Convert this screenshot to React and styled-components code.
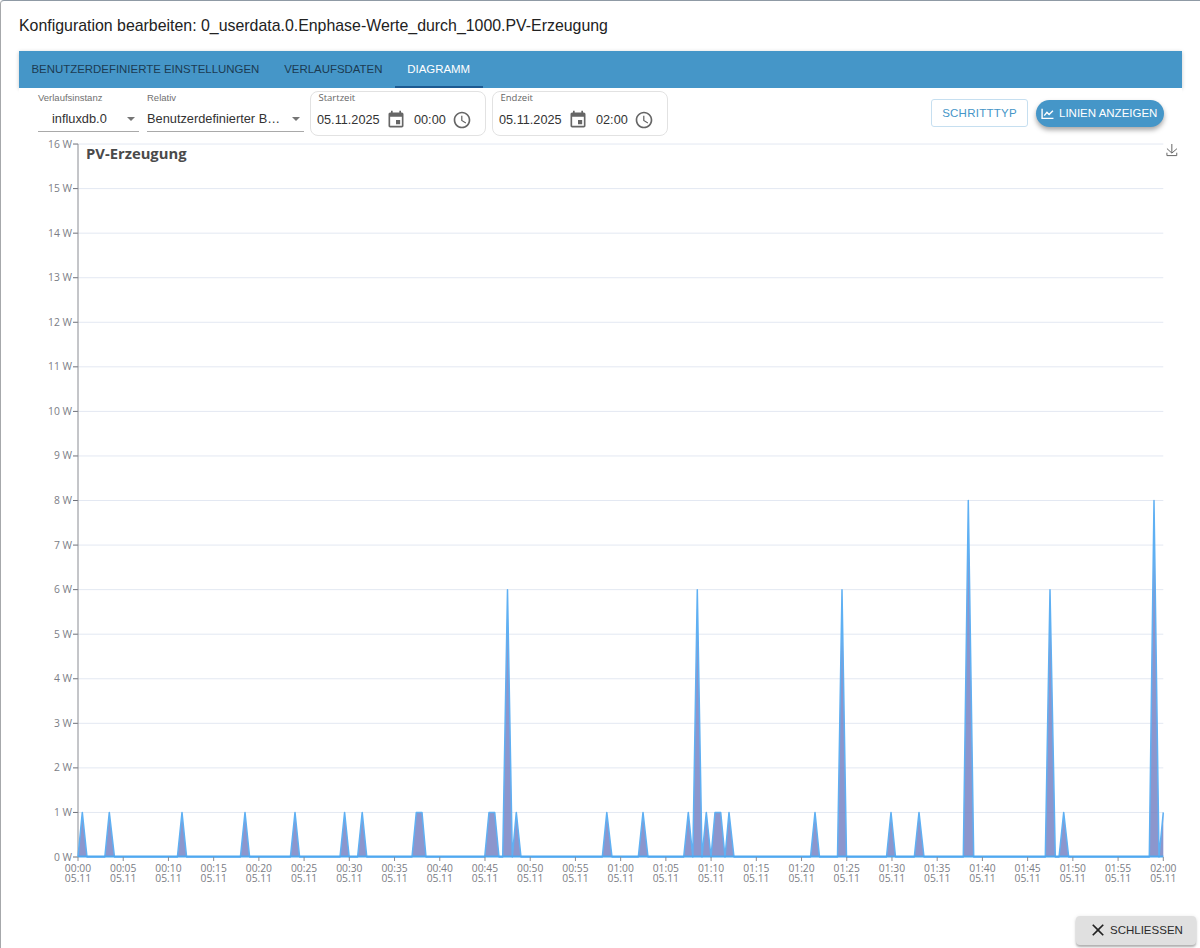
import React from "react";
import styled, { createGlobalStyle } from "styled-components";

const Global = createGlobalStyle`
  html, body { margin: 0; padding: 0; background: #fff; }
  body { font-family: "Liberation Sans", Arial, sans-serif; color: #1f1f1f; }
  * { box-sizing: border-box; }
`;

const Dialog = styled.div`
  width: 1200px;
  height: 948px;
  padding: 0 4px 0 18px;
  background: #fff;
  border-left: 1px solid #a6a8ab;
  border-top: 1px solid #8f9aa5;
  border-top-left-radius: 4px;
  display: flex;
  flex-direction: column;
  overflow: hidden;
`;

const Title = styled.h2`
  margin: 0;
  height: 50px;
  padding-top: 15px;
  font-size: 15.9px;
  line-height: 20px;
  font-weight: 400;
  color: #222;
`;

const Body = styled.div`
  width: 1163px;
  height: 837px;
  display: flex;
  flex-direction: column;
`;

const TabBar = styled.div`
  height: 37px;
  background: #4596c8;
  display: flex;
  box-shadow: 0 1px 4px rgba(0, 0, 0, 0.22);
`;

const Tab = styled.div`
  height: 37px;
  padding: 12px 12.4px 0;
  font-size: 11.45px;
  line-height: 13px;
  color: ${(p) => (p.$active ? "#fff" : "#1c3b52")};
  border-bottom: 2px solid ${(p) => (p.$active ? "#1b5a92" : "transparent")};
`;

const Toolbar = styled.div`
  height: 49px;
  padding: 3px 18px 0 19px;
  display: flex;
  align-items: flex-start;
  background: #fff;
  position: relative;
`;

const SelectField = styled.div`
  width: ${(p) => p.$w}px;
  margin-right: ${(p) => p.$mr}px;
  height: 41px;
  border-bottom: 1px solid #a9a9a9;
  position: relative;
  display: flex;
  flex-direction: column;
`;

const SelectLabel = styled.div`
  font-size: 9.5px;
  line-height: 13px;
  color: #707070;
  white-space: nowrap;
`;

const SelectValue = styled.div`
  margin-top: 6px;
  padding-left: ${(p) => p.$pl}px;
  font-size: 12.8px;
  line-height: 18px;
  color: #333;
  white-space: nowrap;
`;

const Caret = styled.span`
  position: absolute;
  right: 4px;
  top: 26px;
  border-left: 4px solid transparent;
  border-right: 4px solid transparent;
  border-top: 4px solid #757575;
`;

const DateBox = styled.div`
  width: 176px;
  height: 45px;
  margin-right: 6px;
  border: 1px solid #e2e2e2;
  border-radius: 8px;
  padding: 0 6px;
  display: flex;
  flex-direction: column;
`;

const DateLabel = styled.div`
  font-family: "Open Sans", sans-serif;
  font-size: 9.5px;
  line-height: 12px;
  padding-left: 1.5px;
  color: #666;
`;

const DateRow = styled.div`
  display: flex;
  align-items: center;
  height: 24px;
  margin-top: 4px;
  font-size: 12.7px;
  color: #333;
  white-space: nowrap;
`;

const DateText = styled.span`
  width: ${(p) => p.$w}px;
`;

const FieldIcon = styled.svg`
  width: 20px;
  height: 20px;
  fill: #666;
  flex: none;
  margin-top: -1px;
  margin-right: ${(p) => p.$mr || 0}px;
`;

const Spacer = styled.div`
  flex: 1;
`;

const OutlineButton = styled.button`
  width: 97px;
  height: 28px;
  margin: 8px 8px 0 0;
  padding: 0;
  background: #fff;
  border: 1px solid #c6dff0;
  border-radius: 3px;
  color: #4596c8;
  font: 400 11.5px "Liberation Sans", sans-serif;
  letter-spacing: 0.25px;
`;

const PillButton = styled.button`
  width: 128px;
  height: 27px;
  margin-top: 9px;
  padding: 0 0 1px 5px;
  display: flex;
  align-items: center;
  gap: 5px;
  background: #4596c8;
  border: 0;
  border-radius: 14px;
  color: #fff;
  font: 400 11.5px "Liberation Sans", sans-serif;
  white-space: nowrap;
  box-shadow: 0 3px 5px rgba(0, 0, 0, 0.35);
`;

const PillIcon = styled.svg`
  width: 13px;
  height: 13px;
  fill: none;
  stroke: #fff;
  stroke-width: 2.6;
`;

const ChartSvg = styled.svg`
  display: block;
  width: 1163px;
  height: 751px;
`;

const AxisText = styled.text`
  font-family: "Open Sans", "Noto Sans", sans-serif;
  font-size: 10.3px;
  fill: #7b7d85;
`;

const ChartTitle = styled.text`
  font-family: "Open Sans", "Noto Sans", sans-serif;
  font-size: 14.8px;
  font-weight: 700;
  fill: #4a4a4a;
`;

const Footer = styled.div`
  flex: 1;
  display: flex;
  justify-content: flex-end;
  align-items: flex-start;
  padding: 28px 0 0;
`;

const CloseButton = styled.button`
  width: 120px;
  height: 29px;
  display: flex;
  align-items: center;
  padding: 0 0 1px 12px;
  gap: 2px;
  background: #e0e0e0;
  border: 0;
  border-radius: 4px;
  color: #2b2b2b;
  font: 400 11.5px "Liberation Sans", sans-serif;
  box-shadow: 0 2px 2px rgba(0, 0, 0, 0.25), 0 1px 4px rgba(0, 0, 0, 0.12);
`;

const CloseIcon = styled.svg`
  width: 20px;
  height: 20px;
  fill: #222;
`;

const EVENT = "M17 12h-5v5h5v-5zM16 1v2H8V1H6v2H5c-1.11 0-1.99.9-1.99 2L3 19c0 1.1.89 2 2 2h14c1.1 0 2-.9 2-2V5c0-1.1-.9-2-2-2h-1V1h-2zm3 18H5V8h14v11z";
const CLOCK = "M11.99 2C6.47 2 2 6.48 2 12s4.47 10 9.99 10C17.52 22 22 17.52 22 12S17.52 2 11.99 2zM12 20c-4.42 0-8-3.58-8-8s3.58-8 8-8 8 3.58 8 8-3.58 8-8 8zM12.5 7H11v6l5.25 3.15.75-1.23-4.5-2.67z";

const X0 = 78;
const X1 = 1163.3;
const Y0 = 857;
const PW = 44.56;
const yOf = (v) => Y0 - v * PW;

const ticks = Array.from({ length: 25 }, (_, i) => {
  const m = i * 5;
  const h = String(Math.floor(m / 60)).padStart(2, "0");
  const mm = String(m % 60).padStart(2, "0");
  return { x: X0 + (i * (X1 - X0)) / 24, label: `${h}:${mm}` };
});

// [startBase, [peakX...], endBase, value]
const spikes = [
  [78, [82.3], 87, 1],
  [104.8, [109.3], 114.5, 1],
  [177.4, [182], 186.6, 1],
  [240.4, [245], 249.6, 1],
  [290.4, [295], 299.6, 1],
  [340, [344.6], 349.2, 1],
  [357.6, [362.2], 366.8, 1],
  [412, [416.3, 422], 426, 1],
  [484.7, [489, 494.7], 499, 1],
  [502.7, [507.5], 512.3, 6],
  [512.3, [516.3], 521, 1],
  [602.3, [606.8], 612, 1],
  [638.3, [643], 648, 1],
  [683.7, [688.3], 692.8, 1],
  [692.8, [697.3], 702, 6],
  [702, [706.3], 711, 1],
  [711, [715, 720.7], 725, 1],
  [725, [729], 734, 1],
  [810.5, [815], 819.5, 1],
  [837.5, [842], 846.5, 6],
  [886.5, [891], 895.5, 1],
  [914.3, [919], 924, 1],
  [963.3, [968.3], 973.7, 8],
  [1045.3, [1050], 1055.3, 6],
  [1059, [1063.7], 1068.7, 1],
  [1149.3, [1154], 1159, 8],
];

const linePts = [[X0, yOf(0)]];
spikes.forEach(([a, peaks, b, v]) => {
  linePts.push([a, yOf(0)]);
  peaks.forEach((p) => linePts.push([p, yOf(v)]));
  linePts.push([b, yOf(0)]);
});
linePts.push([1159, yOf(0)], [X1, yOf(1)]);
const lineStr = linePts.map((p) => p.join(",")).join(" ");
const areaStr = `${X0},${Y0} ${lineStr} ${X1},${Y0}`;

const Chart = () => (
  <ChartSvg viewBox="19 137 1163 751">
    {Array.from({ length: 16 }, (_, i) => i + 1).map((v) => (
      <line key={v} x1={X0} x2={X1} y1={yOf(v)} y2={yOf(v)} stroke="#e3e8f2" strokeWidth="1" />
    ))}
    {Array.from({ length: 17 }, (_, v) => (
      <g key={v}>
        <line x1={X0 - 5} x2={X0} y1={yOf(v)} y2={yOf(v)} stroke="#6e7079" />
        <AxisText x={X0 - 6} y={yOf(v) + 3.5} textAnchor="end">{v} W</AxisText>
      </g>
    ))}
    <line x1={X0} x2={X0} y1={yOf(16)} y2={Y0} stroke="#8a8c93" strokeWidth="1" />
    <polygon points={areaStr} fill="#6f7cc0" fillOpacity="0.8" />
    <polyline points={lineStr} fill="none" stroke="#5fb0f3" strokeWidth="1.5" strokeLinejoin="round" />
    <line x1={X0} x2={X1} y1={Y0 - 0.5} y2={Y0 - 0.5} stroke="#4fa8f0" strokeWidth="2" />
    {ticks.map((t) => (
      <g key={t.label}>
        <line x1={t.x} x2={t.x} y1={Y0} y2={Y0 + 4} stroke="#8a8c93" />
        <AxisText textAnchor="middle">
          <tspan x={t.x} y={Y0 + 15}>{t.label}</tspan>
          <tspan x={t.x} y={Y0 + 25}>05.11</tspan>
        </AxisText>
      </g>
    ))}
    <ChartTitle x={86} y={159}>PV-Erzeugung</ChartTitle>
    <g transform="translate(1166 144) scale(0.2)" fill="none" stroke="#666" strokeWidth="5">
      <path d="M4.7 22.9L29.3 45.5 54.7 23.4M4.6 43.6L4.6 58 53.8 58 53.8 43.6M29.2 45.1L29.2 0" />
    </g>
  </ChartSvg>
);

const DateField = ({ label, date, time }) => (
  <DateBox>
    <DateLabel>{label}</DateLabel>
    <DateRow>
      <DateText $w={69}>{date}</DateText>
      <FieldIcon viewBox="0 0 24 24" $mr={8}><path d={EVENT} /></FieldIcon>
      <DateText $w={38}>{time}</DateText>
      <FieldIcon viewBox="0 0 24 24"><path d={CLOCK} /></FieldIcon>
    </DateRow>
  </DateBox>
);

export default function App() {
  return (
    <>
      <Global />
      <Dialog>
        <Title>Konfiguration bearbeiten: 0_userdata.0.Enphase-Werte_durch_1000.PV-Erzeugung</Title>
        <Body>
          <TabBar>
            <Tab>BENUTZERDEFINIERTE EINSTELLUNGEN</Tab>
            <Tab>VERLAUFSDATEN</Tab>
            <Tab $active>DIAGRAMM</Tab>
          </TabBar>
          <Toolbar>
            <SelectField $w={101} $mr={8}>
              <SelectLabel>Verlaufsinstanz</SelectLabel>
              <SelectValue $pl={14}>influxdb.0</SelectValue>
              <Caret />
            </SelectField>
            <SelectField $w={157} $mr={6}>
              <SelectLabel>Relativ</SelectLabel>
              <SelectValue $pl={0}>Benutzerdefinierter B…</SelectValue>
              <Caret />
            </SelectField>
            <DateField label="Startzeit" date="05.11.2025" time="00:00" />
            <DateField label="Endzeit" date="05.11.2025" time="02:00" />
            <Spacer />
            <OutlineButton>SCHRITTTYP</OutlineButton>
            <PillButton>
              <PillIcon viewBox="0 0 24 24"><path d="M2 3V21H23M6 16l5-6 4 4 7-7" /></PillIcon>
              LINIEN ANZEIGEN
            </PillButton>
          </Toolbar>
          <Chart />
        </Body>
        <Footer>
          <CloseButton>
            <CloseIcon viewBox="0 0 24 24"><path d="M19 6.41 17.59 5 12 10.59 6.41 5 5 6.41 10.59 12 5 17.59 6.41 19 12 13.41 17.59 19 19 17.59 13.41 12z" /></CloseIcon>
            SCHLIESSEN
          </CloseButton>
        </Footer>
      </Dialog>
    </>
  );
}
